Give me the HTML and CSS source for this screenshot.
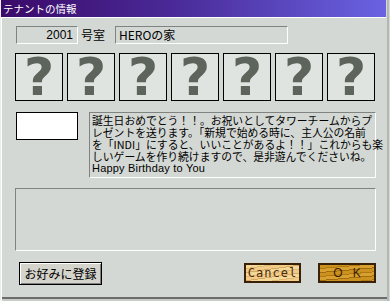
FILE: index.html
```html
<!DOCTYPE html>
<html>
<head>
  <link rel="stylesheet" href="styles.css">
</head>
<body>
  <div class="window">
    <div class="titlebar">テナントの情報</div>
    <div class="content">
      <div class="room-row">
        <div class="field room-no">2001</div>
        <span class="room-label">号室</span>
        <div class="field room-name">HEROの家</div>
      </div>
      <div class="item-row">
        <div class="item">?</div>
        <div class="item">?</div>
        <div class="item">?</div>
        <div class="item">?</div>
        <div class="item">?</div>
        <div class="item">?</div>
        <div class="item">?</div>
      </div>
      <div class="message-row">
        <div class="face"></div>
        <div class="field message">
          <div class="line">誕生日おめでとう！！。お祝いとしてタワーチームからプ</div>
          <div class="line">レゼントを送ります。「新規で始める時に、主人公の名前</div>
          <div class="line">を「INDI」にすると、いいことがあるよ！！」これからも楽</div>
          <div class="line">しいゲームを作り続けますので、是非遊んでくださいね。</div>
          <div class="line latin">Happy Birthday to You</div>
        </div>
      </div>
      <div class="field panel"></div>
      <div class="button-row">
        <button class="btn-plain">お好みに登録</button>
        <div class="spacer"></div>
        <button class="btn-wood cancel">Cancel</button>
        <button class="btn-wood ok">OK</button>
      </div>
    </div>
  </div>
</body>
</html>
```

FILE: styles.css
```css
body {
  margin: 0;
  background: #d4d8d4;
  font-family: "Noto Sans CJK JP", "Liberation Sans", sans-serif;
}
.window {
  width: 390px;
  height: 301px;
  box-sizing: border-box;
  background: #d4d8d4;
  padding: 0 4px 0 1px;
  box-shadow: inset 1px 0 #eceeec, inset 2px 0 #ffffff, inset -1px 0 #d4d8d4, inset -3px 0 #b4b8b4,
    inset 0 -2px #c8ccc8, inset 0 -4px #6c6c6c;
}
.titlebar {
  height: 17px;
  border-bottom: 1px solid #ffffff;
  background: linear-gradient(to right, #3a0a68, #4a2a98 45%, #6a62e2);
  color: #ffffff;
  font-size: 10.5px;
  line-height: 17px;
  padding-left: 2px;
}
.content {
  padding-left: 14px;
}
.field {
  box-sizing: border-box;
  border-top: 1px solid #808480;
  border-left: 1px solid #808480;
  border-right: 1px solid #ffffff;
  border-bottom: 1px solid #ffffff;
  background: #d4d8d4;
}
.room-row {
  display: flex;
  align-items: center;
  margin-top: 8px;
  padding-left: 1px;
  height: 18px;
}
.room-no {
  width: 62px;
  height: 18px;
  text-align: right;
  padding-right: 4px;
  font-family: "Liberation Sans", sans-serif;
  font-size: 12px;
  line-height: 16px;
}
.room-label {
  margin-left: 3px;
  width: 34px;
  font-size: 12px;
  line-height: 16px;
}
.room-name {
  width: 173px;
  height: 18px;
  padding-left: 3px;
  font-size: 12px;
  line-height: 16px;
}
.item-row {
  display: flex;
  gap: 4px;
  margin-top: 9px;
}
.item {
  box-sizing: border-box;
  width: 48px;
  height: 48px;
  border: 1px solid #000000;
  background: #e0e4e0;
  color: #5c645c;
  font-family: "DejaVu Sans", sans-serif;
  font-weight: bold;
  font-size: 52px;
  line-height: 46px;
  text-align: center;
}
.message-row {
  display: flex;
  align-items: flex-start;
  gap: 11px;
  margin-top: 11px;
  padding-left: 1px;
}
.face {
  box-sizing: border-box;
  width: 62px;
  height: 28px;
  border: 1px solid #000000;
  background: #ffffff;
}
.message {
  width: 287px;
  height: 66px;
  padding: 1px 0 0 2px;
  font-size: 10.8px;
  color: #000000;
}
.message .line {
  height: 12px;
  line-height: 12px;
  white-space: nowrap;
}
.message .latin {
  font-family: "Liberation Sans", sans-serif;
  font-size: 11px;
  letter-spacing: 0.2px;
}
.panel {
  width: 361px;
  height: 63px;
  margin-top: 10px;
}
.button-row {
  display: flex;
  align-items: flex-start;
  margin-top: 11px;
  padding-left: 4px;
}
.spacer {
  width: 142px;
}
.btn-plain {
  box-sizing: border-box;
  width: 83px;
  height: 23px;
  padding: 0;
  border: 1px solid #000000;
  background: #d4d4cc;
  box-shadow: inset 1px 1px #ffffff, inset -1px -1px #808080;
  font-family: "Noto Sans CJK JP", sans-serif;
  font-size: 12px;
  color: #000000;
}
.btn-wood {
  box-sizing: border-box;
  height: 20px;
  margin-top: 1px;
  padding: 0;
  border: 2px solid #3a2006;
  font-family: "DejaVu Sans Mono", monospace;
  font-size: 12px;
  line-height: 15px;
  letter-spacing: 1px;
}
.cancel {
  width: 57px;
  color: #4a2c10;
  background: repeating-linear-gradient(172deg, #f4d898 0 3px, #e2b870 3px 4px, #f0cc88 4px 7px, #d8a860 7px 8px);
}
.ok {
  width: 58px;
  margin-left: 17px;
  color: #3a1c00;
  letter-spacing: 10px;
  padding-left: 10px;
  font-family: "Liberation Sans", sans-serif;
  background: repeating-linear-gradient(175deg, #cc9220 0 3px, #b07810 3px 4px, #d8a030 4px 7px, #a06c0c 7px 8px);
}
```
